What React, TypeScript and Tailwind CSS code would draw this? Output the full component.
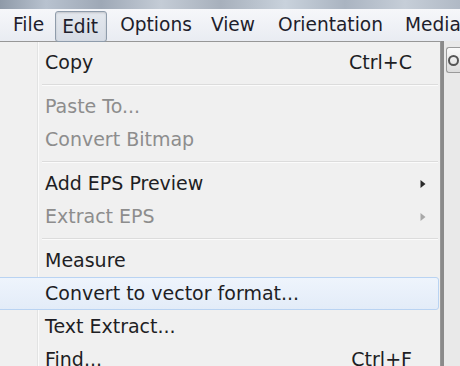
import React from "react";

const font = { fontFamily: '"DejaVu Sans", Verdana, sans-serif' };

function Sep() {
  return (
    <div className="flex h-[11px] items-center pl-[42px] pr-[2px]">
      <div className="w-full border-t border-[#dcdcdc] border-b border-b-[#fbfbfb]" />
    </div>
  );
}

function Arrow({ disabled }: { disabled?: boolean }) {
  return (
    <svg width="6" height="10" viewBox="0 0 6 10" className="mr-[14px]">
      <path d="M0.5 1 L5.5 5 L0.5 9 Z" fill={disabled ? "#a8a8a8" : "#2a2a2a"} />
    </svg>
  );
}

function Item({
  label,
  shortcut,
  disabled,
  submenu,
  hot,
}: {
  label: string;
  shortcut?: string;
  disabled?: boolean;
  submenu?: boolean;
  hot?: boolean;
}) {
  return (
    <div
      className={
        "relative flex h-[33px] items-center pl-[45px] pr-[28px] leading-[33px] " +
        (disabled ? "text-[#8d8d8d]" : "text-[#1e1e24]")
      }
    >
      {hot && (
        <div className="absolute left-[-4px] right-[1px] top-0 bottom-0 rounded-[3px] border border-[#b9d3f2] bg-[linear-gradient(#eef4fc,#e3ecf8)]" />
      )}
      <span className="relative flex-1 whitespace-nowrap">{label}</span>
      {shortcut && <span className="relative whitespace-nowrap">{shortcut}</span>}
      {submenu && (
        <span className="relative -mr-[28px] flex items-center">
          <Arrow disabled={disabled} />
        </span>
      )}
    </div>
  );
}

export default function App() {
  return (
    <div
      className="relative h-[366px] w-[460px] overflow-hidden bg-[#f0f0f0]"
      style={font}
    >
      {/* title bar remnant */}
      <div className="h-[9px] w-full bg-[linear-gradient(90deg,#8f9aa8_0%,#b8c2cf_10%,#9ea8b6_22%,#c4ccd6_35%,#a7b0bc_48%,#c9d2dc_62%,#aab4c1_75%,#c6ced8_88%,#b0b9c5_100%)]" />
      {/* menu bar */}
      <div className="flex h-[32px] items-stretch bg-[linear-gradient(#f6f7fa,#e9ecf2)] text-[18.6px] leading-[32px] text-[#1e1e2c]">
        <div className="w-[4px] bg-[#6f747c]" />
        <span className="ml-[13px]">File</span>
        <span className="relative z-10 ml-[11px] mt-[2px] h-[31px] rounded-[3px] border border-[#8f9cab] bg-[linear-gradient(#e4e8ee,#d6dce5)] pl-[6px] pr-[8px] leading-[29px] shadow-[inset_0_1px_2px_rgba(0,0,0,0.15)]">
          Edit
        </span>
        <span className="ml-[13px]">Options</span>
        <span className="ml-[19px]">View</span>
        <span className="ml-[23px]">Orientation</span>
        <span className="ml-[22px] whitespace-nowrap">Media</span>
      </div>
      {/* body */}
      <div className="flex h-[325px] text-[19px]">
        <div className="relative w-[441px] shrink-0 border-t border-r border-[#979797] bg-[#f0f0f0] pt-[4px]">
          {/* gutter line */}
          <div className="absolute left-[37px] top-0 bottom-0 w-[2px] border-l border-[#e2e3e3] bg-[#fbfbfb]" />
          <Item label="Copy" shortcut="Ctrl+C" />
          <Sep />
          <Item label="Paste To..." disabled />
          <Item label="Convert Bitmap" disabled />
          <Sep />
          <Item label="Add EPS Preview" submenu />
          <Item label="Extract EPS" submenu disabled />
          <Sep />
          <Item label="Measure" />
          <Item label="Convert to vector format..." hot />
          <Item label="Text Extract..." />
          <Item label="Find..." shortcut="Ctrl+F" />
        </div>
        <div className="flex flex-1 border-l-[3px] border-[#8a8a8a] bg-[#e9e9e9]">
          <div className="ml-[2px] mt-[6px] flex h-[26px] w-[14px] items-center justify-center rounded-l-[3px] border border-r-0 border-[#9a9a9a] bg-[linear-gradient(#fafafa,#dcdcdc)]">
            <div className="h-[11px] w-[11px] rounded-full border-[2px] border-[#555]" />
          </div>
        </div>
      </div>
    </div>
  );
}
